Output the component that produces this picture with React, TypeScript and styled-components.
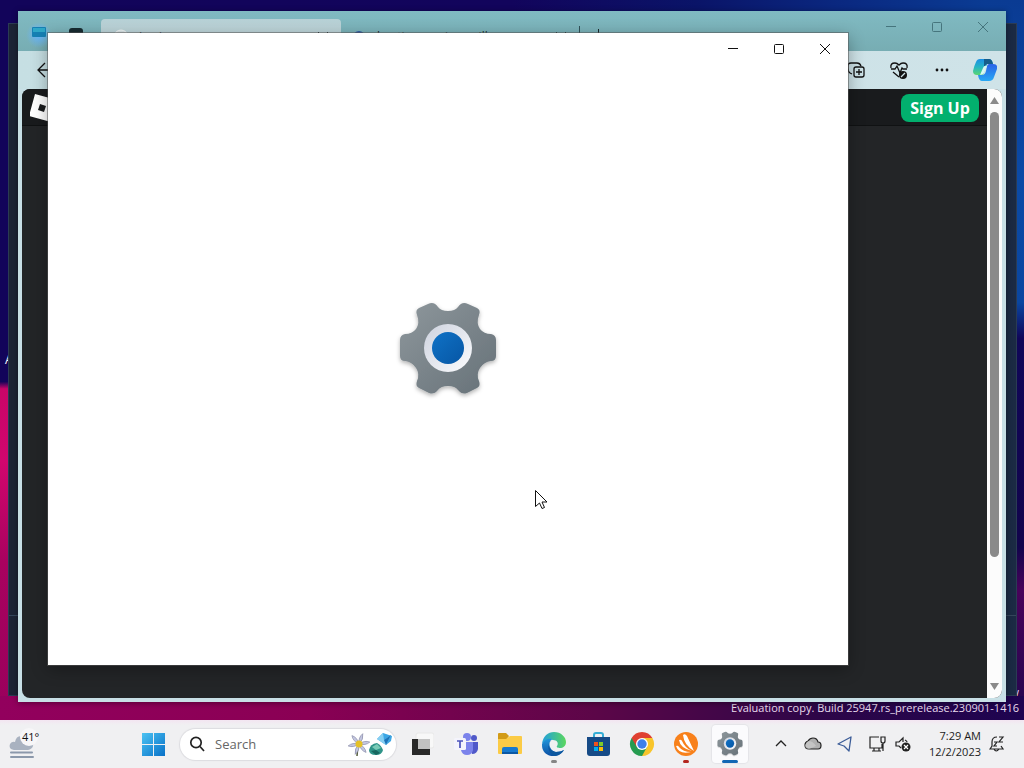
import React from "react";
import styled, { createGlobalStyle } from "styled-components";

const GlobalStyle = createGlobalStyle`
  *, *::before, *::after { box-sizing: border-box; }
  body { margin: 0; font-family: "Open Sans", "Noto Sans", sans-serif; font-size: 12px; overflow: hidden; }
  button, input { font: inherit; color: inherit; border: 0; padding: 0; background: none; }
  svg { display: block; flex: none; }
`;

const Screen = styled.div`
  height: 100vh;
  display: flex;
  flex-direction: column;
`;

const Desktop = styled.main`
  flex: 1;
  min-height: 0;
  position: relative;
  overflow: hidden;
  background:
    linear-gradient(90deg, #92005d, #8a0054 30%, #5c0648 58%, #2d0648 80%, #1e0450) bottom / 100% 24px no-repeat,
    linear-gradient(#12045a 0 53%, #c80568 54%, #d2066e 64%, #a8025f 78%, #98005c) left / 40px 100% no-repeat,
    linear-gradient(#0a3b93, #0b4aa6 25%, #0a46a0 42%, #100659 47%, #12044c 76%, #48025a 82%, #2a0550 96%) right / 40px 100% no-repeat,
    linear-gradient(90deg, #12045a, #12045c 50%, #0a1468 68%, #0a2880 82%, #0a3b93 96%);
`;

const IconLabel = styled.span`
  position: absolute;
  left: 5px;
  top: 50%;
  margin-top: -8px;
  color: #fff;
  line-height: 16px;
`;

const Watermark = styled.p`
  position: absolute;
  right: 5px;
  bottom: 4px;
  margin: 0;
  color: #e9dcee;
  font-size: 11px;
  line-height: 16px;
  text-align: right;
  white-space: nowrap;
`;

const BackWindow = styled.section`
  position: absolute;
  inset: 23px 7px 24px 8px;
  display: flex;
  flex-direction: column;
  justify-content: flex-end;
  background: linear-gradient(90deg, #1c2436 50%, #1b2a44);
  border: 1px solid #2b3b54;
`;

const BackFooter = styled.footer`
  height: 80px;
  border-top: 1px solid #35465c;
`;

const BrowserWindow = styled.section`
  position: absolute;
  inset: 11px 18px 18px;
  display: flex;
  flex-direction: column;
  background: #c8e0e6;
  box-shadow: 0 1px 6px #0006;
`;

const TitleBar = styled.header`
  height: 40px;
  display: flex;
  align-items: flex-start;
  flex: none;
  background: linear-gradient(#80bac2, #77adb3);
`;

const Workspace = styled.div`
  width: 83px;
  padding: 13px 12px;
  display: flex;
  gap: 20px;
`;

const Tab = styled.button<{ $active?: boolean; $width: number }>`
  width: ${(p) => p.$width}px;
  height: 32px;
  margin-top: 8px;
  padding: 3px 12px 0;
  display: flex;
  align-items: center;
  gap: ${(p) => (p.$active ? 10 : 12)}px;
  border-radius: 4px 4px 0 0;
  background: ${(p) => (p.$active ? "linear-gradient(#b7d1d6, #c9dce0)" : "transparent")};
  color: #18282c;
  white-space: nowrap;
`;

const TabTitle = styled.span`
  flex: 1;
  text-align: left;
  line-height: 16px;
`;

const NewTab = styled.button`
  width: 36px;
  height: 18px;
  margin-top: 15px;
  display: grid;
  place-items: center;
  border-left: 1px solid #2f5158;
`;

const Captions = styled.div<{ $dim?: boolean }>`
  display: flex;
  margin-left: auto;
  color: ${(p) => (p.$dim ? "#46757d" : "#111")};
`;

const CaptionButton = styled.button`
  width: 46px;
  height: 32px;
  display: grid;
  place-items: center;
`;

const Toolbar = styled.nav`
  height: 38px;
  flex: none;
  display: flex;
  align-items: center;
  justify-content: space-between;
  padding: 0 9px 0 16px;
  background: linear-gradient(90deg, #c6dfe3, #cfe3e8);
`;

const ToolGroup = styled.div`
  display: flex;
  align-items: center;
  gap: 19px;
`;

const IconButton = styled.button`
  width: 24px;
  height: 24px;
  display: grid;
  place-items: center;
`;

const Page = styled.div`
  flex: 1;
  min-height: 0;
  margin: 0 4px 4px;
  display: flex;
  overflow: hidden;
  border-radius: 8px;
  background: #232527;
`;

const PageBody = styled.div`
  flex: 1;
`;

const SiteHeader = styled.header`
  height: 37px;
  padding: 2px 8px 0;
  display: flex;
  align-items: center;
  justify-content: space-between;
  background: #191b1d;
  border-bottom: 1px solid #101213;
`;

const SignUp = styled.button`
  width: 78px;
  height: 28px;
  border-radius: 8px;
  background: #02b06e;
  color: #fff;
  font-family: "Open Sans", sans-serif;
  font-size: 16px;
  line-height: 24px;
  font-weight: 700;
`;

const Scrollbar = styled.div`
  width: 15px;
  padding: 8px 3px;
  display: flex;
  flex-direction: column;
  background: #fcfcfc;
`;

const ScrollTrack = styled.div`
  flex: 1;
  margin: 7px 0;
`;

const ScrollThumb = styled.div`
  height: 79%;
  border-radius: 5px;
  background: #8a8a8a;
`;

const SettingsWindow = styled.section`
  position: absolute;
  inset: 33px 176px 55px 48px;
  display: flex;
  flex-direction: column;
  background: #fff;
  box-shadow: 0 0 0 1px #5558, 0 4px 16px #0005;
`;

const SplashBody = styled.div`
  flex: 1;
  padding-bottom: 30px;
  display: grid;
  place-items: center;
`;

const Cursor = styled.svg`
  position: absolute;
  left: 534px;
  top: 489px;
`;

const Taskbar = styled.footer`
  height: 48px;
  flex: none;
  display: flex;
  align-items: center;
  background: linear-gradient(#f3e5f1, #f0f0f2 5px);
  color: #1c1c1c;
`;

const Weather = styled.button`
  width: 131px;
  height: 40px;
  padding: 2px 8px;
  text-align: left;
`;

const TaskButton = styled.button<{ $open?: boolean }>`
  width: 36px;
  height: 38px;
  margin: 0 4px;
  display: grid;
  place-items: center;
  flex: none;
  border-radius: 4px;
  background: ${(p) => (p.$open ? "#fbfbfd" : "transparent")};
  box-shadow: ${(p) => (p.$open ? "0 0 1px 1px #e4e4e8" : "none")};
`;

const Running = styled.span<{ $color: string; $wide?: boolean }>`
  position: absolute;
  left: 50%;
  bottom: -6px;
  width: ${(p) => (p.$wide ? 16 : 6)}px;
  height: 3px;
  border-radius: 2px;
  background: ${(p) => p.$color};
  transform: translateX(-50%);
`;

const IconHolder = styled.span`
  position: relative;
  display: block;
`;

const SearchBox = styled.label`
  width: 216px;
  height: 31px;
  margin: 0 4px 0 5px;
  padding: 0 2px 0 9px;
  display: flex;
  align-items: center;
  gap: 10px;
  border-radius: 16px;
  background: #fff;
  box-shadow: 0 0 1px 1px #dcdce0;
`;

const SearchInput = styled.input`
  flex: 1;
  min-width: 0;
  outline: 0;
  font-size: 13px;
  &::placeholder { color: #666; opacity: 1; }
`;

const Tray = styled.div`
  margin-left: auto;
  padding-right: 18px;
  display: flex;
  align-items: center;
`;

const TrayButton = styled.button<{ $width?: number }>`
  width: ${(p) => p.$width ?? 32}px;
  height: 32px;
  display: grid;
  place-items: center;
`;

const Clock = styled.button`
  width: 68px;
  margin-right: 7px;
  font-size: 11px;
  line-height: 16px;
  text-align: right;
  white-space: nowrap;
`;

const Minimize = () => (
  <svg width="12" height="12" stroke="currentColor" fill="none"><path d="M1 5.5h10" /></svg>
);
const Maximize = () => (
  <svg width="12" height="12" stroke="currentColor" fill="none"><rect x="1.5" y="1.5" width="9" height="9" rx="1" /></svg>
);
const Close = () => (
  <svg width="12" height="12" stroke="currentColor" fill="none"><path d="m1 1 10 10M11 1 1 11" /></svg>
);

const WindowCaptions = ({ dim }: { dim?: boolean }) => (
  <Captions $dim={dim}>
    <CaptionButton aria-label="Minimize"><Minimize /></CaptionButton>
    <CaptionButton aria-label="Maximize"><Maximize /></CaptionButton>
    <CaptionButton aria-label="Close"><Close /></CaptionButton>
  </Captions>
);

const gearPath =
  "M30 4Q36 1 40 7Q43 11 50 11Q57 11 60 7Q64 1 70 4L79 8Q83 10 81 15Q78 23 82 29Q86 34 93 34Q98 35 98 40V56Q98 61 93 61Q86 62 82 68Q78 74 81 81Q83 86 79 88L69 93Q64 95 60 90Q57 86 50 86Q43 86 40 90Q36 95 31 93L21 88Q17 86 19 81Q22 74 18 68Q14 62 7 61Q2 61 2 56V40Q2 35 7 34Q14 34 18 29Q22 23 19 15Q17 10 21 8Z";

const Gear = ({ size, id }: { size: number; id: string }) => (
  <svg width={size} height={size} viewBox="0 0 100 100" overflow="visible">
    <defs>
      <linearGradient id={id} x2="1" y2="1"><stop stopColor="#8e979c" /><stop offset="1" stopColor="#667178" /></linearGradient>
      <linearGradient id={id + "r"} x2="1" y2="1"><stop stopColor="#cdd2de" /><stop offset="1" stopColor="#fbfcfe" /></linearGradient>
      <linearGradient id={id + "b"} x2="1" y2="1"><stop stopColor="#0f72c6" /><stop offset="1" stopColor="#0756a4" /></linearGradient>
      <filter id={id + "s"} x="-20%" y="-20%" width="140%" height="140%"><feDropShadow dx="0" dy="2" stdDeviation="2" floodOpacity=".3" /></filter>
    </defs>
    <path d={gearPath} fill={`url(#${id})`} filter={`url(#${id}s)`} />
    <circle cx="50" cy="48" r="24" fill={`url(#${id}r)`} />
    <circle cx="50" cy="48" r="16" fill={`url(#${id}b)`} />
  </svg>
);

const Copilot = () => (
  <svg width="24" height="24" viewBox="0 0 24 24">
    <defs>
      <linearGradient id="cpA" x2="0" y2="1"><stop stopColor="#1b8fe6" /><stop offset=".5" stopColor="#25b5c4" /><stop offset="1" stopColor="#5bd672" /></linearGradient>
      <linearGradient id="cpB" x2="0" y2="1"><stop stopColor="#2a62e8" /><stop offset="1" stopColor="#28a8f4" /></linearGradient>
    </defs>
    <path d="M7 1h9q3 0 4 5h-6l-4 11H4q-4 0-4-4 1-5 3-9 1-3 4-3Z" fill="url(#cpA)" />
    <path d="M11 1h5q3 0 4 5h-5q-3 0-4 5Z" fill="#155d8b" />
    <path d="M16 6h4q5 0 4 5l-3 8q-1 4-5 4H9q-3 0-4-6h4q3 0 4-4l1-5q1-2 2-2Z" fill="url(#cpB)" />
    <path d="m14 8-3 7q-1 2-4 2l3-7q1-3 4-2Z" fill="#d9f8f3" />
  </svg>
);

const Collections = () => (
  <svg width="20" height="20" viewBox="0 0 20 20" fill="none" stroke="#111" strokeWidth="1.3">
    <path d="M6 14 4 13Q2 12 2 8V6Q2 3 5 3h6q3 0 4 3" /><rect x="8" y="7" width="10" height="10" rx="2" /><path d="M13 9v6M10 12h6" />
  </svg>
);

const Heart = () => (
  <svg width="20" height="20" viewBox="0 0 20 20" fill="none" stroke="#111" strokeWidth="1.3">
    <path d="M2 8Q1 3 6 3q2 0 4 2 2-2 4-2 5 0 4 5M2 9h4l2-3 3 7 2-5 1 1h4M4 12l6 5" />
    <circle cx="14" cy="15" r="4" fill="#111" stroke="none" /><path d="m12 17 4-4" stroke="#cfe3e8" />
  </svg>
);

const RobloxLogo = () => (
  <svg width="28" height="28" viewBox="0 0 28 28"><path fill="#fff" fillRule="evenodd" d="M5 0 27 6 21 28-1 22ZM10 10 8 16 14 18 16 12Z" /></svg>
);

const WeatherIcon = () => (
  <svg width="34" height="32" viewBox="0 0 34 32">
    <path d="M6 22q-6-1-4-6 2-3 5-2 1-6 6-6 5 0 5 6h4q4 1 3 4t-5 4Z" fill="#a9b2c0" />
    <circle cx="21" cy="9" r="9" fill="#f7f6f8" />
    <path d="M3 24.500h21M3 29h22" stroke="#8b98ab" strokeWidth="2" strokeLinecap="round" />
    <text x="14" y="13" fontSize="11" fill="#111">41°</text>
  </svg>
);

const StartIcon = () => (
  <svg width="24" height="24" viewBox="0 0 24 24">
    <defs><linearGradient id="start" gradientUnits="userSpaceOnUse" x2="24" y2="24"><stop stopColor="#4fc6f4" /><stop offset="1" stopColor="#0871c8" /></linearGradient></defs>
    <path fill="url(#start)" d="M1 1h11v11H1zM13 1h11v11H13zM1 13h11v11H1zM13 13h11v11H13z" />
  </svg>
);

const SearchIcon = () => (
  <svg width="16" height="16" fill="none" stroke="#222" strokeWidth="1.700"><circle cx="7" cy="6.500" r="5.200" /><path d="m11 10.500 4 4.500" /></svg>
);

const SearchArt = () => (
  <svg width="46" height="28" viewBox="0 0 46 28">
    <path d="m10 15-1 11" stroke="#555d3b" strokeWidth="1.500" />
    <g fill="#c3c6e0" stroke="#8688a4" strokeWidth=".6">
      {[20, 80, 140, 200, 260, 320].map((a) => <path key={a} d="M11 14Q8 8 11 3q3 5 0 11Z" transform={`rotate(${a} 11 14)`} />)}
    </g>
    <circle cx="11" cy="14" r="3.500" fill="#e5c126" />
    <path d="m29 9 6-6 9 3-1 5-5 4Z" fill="#3ba6e5" /><path d="m29 9 6-6 1 7 7-5-5 10Z" fill="#86cff2" /><path d="m36 10 7-5-5 10Z" fill="#1c73b8" />
    <path d="M21 20q1-6 8-7 4 2 6 7-1 5-7 5-7 0-7-5Z" fill="#2f9488" /><path d="m24 17 5-3 4 4-5 2Z" fill="#7acbb7" /><path d="m23 21 5-1 4 3-4 2Z" fill="#17675f" />
  </svg>
);

const TaskView = () => (
  <svg width="24" height="24" viewBox="0 0 24 24">
    <rect x="6" y="1" width="18" height="15" rx="2" fill="#f8f8f8" stroke="#e8e8e8" />
    <path d="M2 7h18v16H2z" fill="#292929" /><path d="M8 7h12v10H8z" fill="#c2c2c2" />
  </svg>
);

const Teams = () => (
  <svg width="26" height="24" viewBox="0 0 26 24">
    <circle cx="21" cy="6" r="3" fill="#5059c9" /><circle cx="14" cy="5" r="4" fill="#7b83eb" />
    <path d="M16 10h9v7q-1 5-6 5Z" fill="#5059c9" /><path d="M8 10h12v8q-1 5-6 5t-6-5Z" fill="#7b83eb" />
    <rect x="1" y="6" width="12" height="12" rx="1.500" fill="#f4f4fc" /><path d="M4 9h6M7 9v7" stroke="#4b53bc" strokeWidth="1.700" />
  </svg>
);

const Folder = () => (
  <svg width="26" height="24" viewBox="0 0 26 24">
    <path d="M1 2q0-1 1-1h7l3 3-3 4H1Z" fill="#d29b17" /><path d="M1 7h8l4-3h11q1 0 1 1v16q0 1-1 1H2q-1 0-1-1Z" fill="#fbcb46" />
    <path d="M5 22v-5q0-2 2-2h12q2 0 2 2v5Z" fill="#1779cf" /><path d="M5 20h16v2H5Z" fill="#0b58a4" />
  </svg>
);

const Edge = () => (
  <svg width="26" height="26" viewBox="0 0 26 26">
    <defs>
      <linearGradient id="edgeT" x2="1"><stop stopColor="#219fdd" /><stop offset="1" stopColor="#5bd75e" /></linearGradient>
      <linearGradient id="edgeB" x2="0" y2="1"><stop stopColor="#2095db" /><stop offset="1" stopColor="#0b50a4" /></linearGradient>
    </defs>
    <path d="M1 13C2 5 7 1 13 1c7 0 12 5 12 10 0 4-3 6-6 6-2 0-4-1-3-2 2-3 0-6-4-6-6-1-9 2-11 4Z" fill="url(#edgeT)" />
    <path d="M1 13c2-4 6-6 10-5-5 4-2 12 4 13 3 0 6-1 8-2-5 8-17 8-21 0-1-2-1-4-1-6Z" fill="url(#edgeB)" />
    <path d="M11 9c-6 4-3 11 4 12 3 0 6-1 8-2-3 5-7 6-10 6C7 22 5 13 11 9Z" fill="#0c579f" />
  </svg>
);

const Store = () => (
  <svg width="24" height="26" viewBox="0 0 24 26">
    <path d="M8 8V4q0-2 2-2h5q2 0 2 2v4" fill="none" stroke="#35add5" strokeWidth="2" /><path d="M1 6h23v16q0 3-3 3H4q-3 0-3-3Z" fill="#164a86" />
    <path d="M8 11h4v4H8z" fill="#f1511b" /><path d="M13 11h4v4h-4z" fill="#80cc28" /><path d="M8 16h4v4H8z" fill="#00adef" /><path d="M13 16h4v4h-4z" fill="#fbbc09" />
  </svg>
);

const Chrome = () => (
  <svg width="26" height="26" viewBox="0 0 26 26">
    <path d="M13 13 2.600 7A12 12 0 0 1 23.400 7Z" fill="#df4031" /><path d="M13 13 23.400 7A12 12 0 0 1 13 25Z" fill="#f8c52b" /><path d="M13 13v12A12 12 0 0 1 2.600 7Z" fill="#269b50" />
    <path d="M13 7h10.400L18 16Z" fill="#f8c52b" /><path d="m7.800 16-5.200-9L13 7Z" fill="#df4031" /><path d="m18 16-5 9-5.200-9Z" fill="#269b50" />
    <circle cx="13" cy="13" r="6" fill="#fff" /><circle cx="13" cy="13" r="4.700" fill="#3d7fe8" />
  </svg>
);

const Avast = () => (
  <svg width="26" height="26" viewBox="0 0 26 26">
    <circle cx="13" cy="13" r="12" fill="#f8811b" />
    <path d="M10 4q2-2 4 1l7 15Q11 14 10 4ZM6 9q2-1 3 1 3 7 10 10Q7 17 6 9ZM3 15q2-1 3 1 4 5 12 5-12 3-15-6Z" fill="#fff" />
  </svg>
);

const Chevron = () => (
  <svg width="12" height="8" fill="none" stroke="#222" strokeWidth="1.300"><path d="m1 6 5-5 5 5" /></svg>
);
const Cloud = () => (
  <svg width="18" height="14" viewBox="0 0 18 14">
    <path d="M5 12Q1 12 1 8 1 5 4 4 6 1 9 1q4 0 5 4 3 0 3 3.500T14 12Z" fill="#b0b0b0" stroke="#222" strokeWidth="1.200" /><path d="M4 4q5 0 8 5l-7 3q-4 0-4-4Z" fill="#d2d2d2" opacity=".6" />
  </svg>
);
const Location = () => (
  <svg width="16" height="18" fill="none" stroke="#3b5c98" strokeWidth="1.300"><path d="M14 2 1 9l6 2 5 5Z" strokeLinejoin="round" /></svg>
);
const Network = () => (
  <svg width="18" height="18" fill="none" stroke="#222" strokeWidth="1.200"><path d="M11 2H2v11h12v-4M6 13v3M11 13v3M4 16h9M13 2h4v4q0 2-2 2t-2-2ZM15 8v8" /></svg>
);
const Sound = () => (
  <svg width="18" height="18" fill="none" stroke="#222" strokeWidth="1.200">
    <path d="M7 13 5 11H2V7h3l4-4v4M11 5q2 1 2 2" /><circle cx="12" cy="12" r="4.500" fill="#222" stroke="none" /><path d="m10 10 4 4m0-4-4 4" stroke="#fff" />
  </svg>
);
const Bell = () => (
  <svg width="16" height="18" fill="none" stroke="#222" strokeWidth="1.200">
    <path d="M8 2Q3 2 3 7v4l-2 3h13l-2-3M5 14q2 4 5 0M5 7h3l-3 4h3M10 2h4l-4 5h4" />
  </svg>
);

export default function App() {
  return (
    <Screen>
      <GlobalStyle />
      <Desktop>
        <IconLabel>A</IconLabel>
        <Watermark>Windows 11 Pro Insider Preview<br />Evaluation copy. Build 25947.rs_prerelease.230901-1416</Watermark>
        <BackWindow><BackFooter /></BackWindow>
        <BrowserWindow aria-label="Browser">
          <TitleBar>
            <Workspace>
              <svg width="18" height="18" viewBox="0 0 18 18" overflow="visible">
                <defs><radialGradient id="glow"><stop stopColor="#65b4ff" /><stop offset="1" stopColor="#65b4ff" stopOpacity="0" /></radialGradient></defs>
                <circle cx="9" cy="11" r="13" fill="url(#glow)" />
                <rect x="2" y="3" width="14" height="10" rx="1" fill="#1680b4" /><path d="M3 4h12v4H3z" fill="#2fa8c8" />
              </svg>
              <svg width="16" height="16" viewBox="0 0 16 16"><path d="M1 16V7q0-3 3-3h8q3 0 3 3v9Z" fill="#172b31" /></svg>
            </Workspace>
            <Tab $active $width={240}>
              <svg width="16" height="16" fill="#d9e4e6" stroke="#f0f5f5"><circle cx="8" cy="8" r="7" /></svg>
              <TabTitle>Login</TabTitle><Close />
            </Tab>
            <Tab $width={238}>
              <svg width="12" height="16" fill="none" stroke="#305ca5" strokeWidth="2"><circle cx="6" cy="8" r="5" /></svg>
              <TabTitle>hosting services will</TabTitle><Close />
            </Tab>
            <NewTab aria-label="New tab"><svg width="14" height="14" stroke="#18282c"><path d="M7.500 1v13M1 8h13" /></svg></NewTab>
            <WindowCaptions dim />
          </TitleBar>
          <Toolbar>
            <IconButton aria-label="Back">
              <svg width="18" height="16" fill="none" stroke="#111" strokeWidth="1.300"><path d="M17 8H1M8 1 1 8l7 7" /></svg>
            </IconButton>
            <ToolGroup>
              <IconButton aria-label="Collections"><Collections /></IconButton>
              <IconButton aria-label="Browser essentials"><Heart /></IconButton>
              <IconButton aria-label="More"><svg width="16" height="4" fill="#111"><circle cx="3" cy="2" r="1.400" /><circle cx="8" cy="2" r="1.400" /><circle cx="13" cy="2" r="1.400" /></svg></IconButton>
              <IconButton aria-label="Copilot"><Copilot /></IconButton>
            </ToolGroup>
          </Toolbar>
          <Page>
            <PageBody>
              <SiteHeader><RobloxLogo /><SignUp>Sign Up</SignUp></SiteHeader>
            </PageBody>
            <Scrollbar>
              <svg width="9" height="8" fill="#8a8a8a"><path d="m4.500 0 4.500 7H0Z" /></svg>
              <ScrollTrack><ScrollThumb /></ScrollTrack>
              <svg width="9" height="8" fill="#8a8a8a"><path d="M0 1h9L4.500 8Z" /></svg>
            </Scrollbar>
          </Page>
        </BrowserWindow>
        <SettingsWindow aria-label="Settings">
          <WindowCaptions />
          <SplashBody><Gear size={100} id="gearL" /></SplashBody>
        </SettingsWindow>
        <Cursor width="14" height="22" viewBox="0 0 14 22"><path d="M1.500 1.500v16l4-3.500 2.500 5.500 2.500-1L8 13h5Z" fill="#fff" stroke="#111" /></Cursor>
      </Desktop>
      <Taskbar>
        <Weather aria-label="Weather, 41 degrees"><WeatherIcon /></Weather>
        <TaskButton aria-label="Start"><StartIcon /></TaskButton>
        <SearchBox><SearchIcon /><SearchInput aria-label="Search" placeholder="Search" /><SearchArt /></SearchBox>
        <TaskButton aria-label="Task view"><TaskView /></TaskButton>
        <TaskButton aria-label="Teams"><Teams /></TaskButton>
        <TaskButton aria-label="File Explorer"><Folder /></TaskButton>
        <TaskButton aria-label="Edge"><IconHolder><Edge /><Running $color="#858585" /></IconHolder></TaskButton>
        <TaskButton aria-label="Store"><Store /></TaskButton>
        <TaskButton aria-label="Chrome"><Chrome /></TaskButton>
        <TaskButton aria-label="Antivirus"><IconHolder><Avast /><Running $color="#b3261e" /></IconHolder></TaskButton>
        <TaskButton $open aria-label="Settings"><IconHolder><Gear size={26} id="gearS" /><Running $wide $color="#1267b4" /></IconHolder></TaskButton>
        <Tray>
          <TrayButton aria-label="Show hidden icons"><Chevron /></TrayButton>
          <TrayButton aria-label="OneDrive"><Cloud /></TrayButton>
          <TrayButton aria-label="Location"><Location /></TrayButton>
          <TrayButton aria-label="Network"><Network /></TrayButton>
          <TrayButton $width={20} aria-label="Volume muted"><Sound /></TrayButton>
          <Clock>7:29 AM<br />12/2/2023</Clock>
          <TrayButton $width={18} aria-label="Notifications"><Bell /></TrayButton>
        </Tray>
      </Taskbar>
    </Screen>
  );
}
